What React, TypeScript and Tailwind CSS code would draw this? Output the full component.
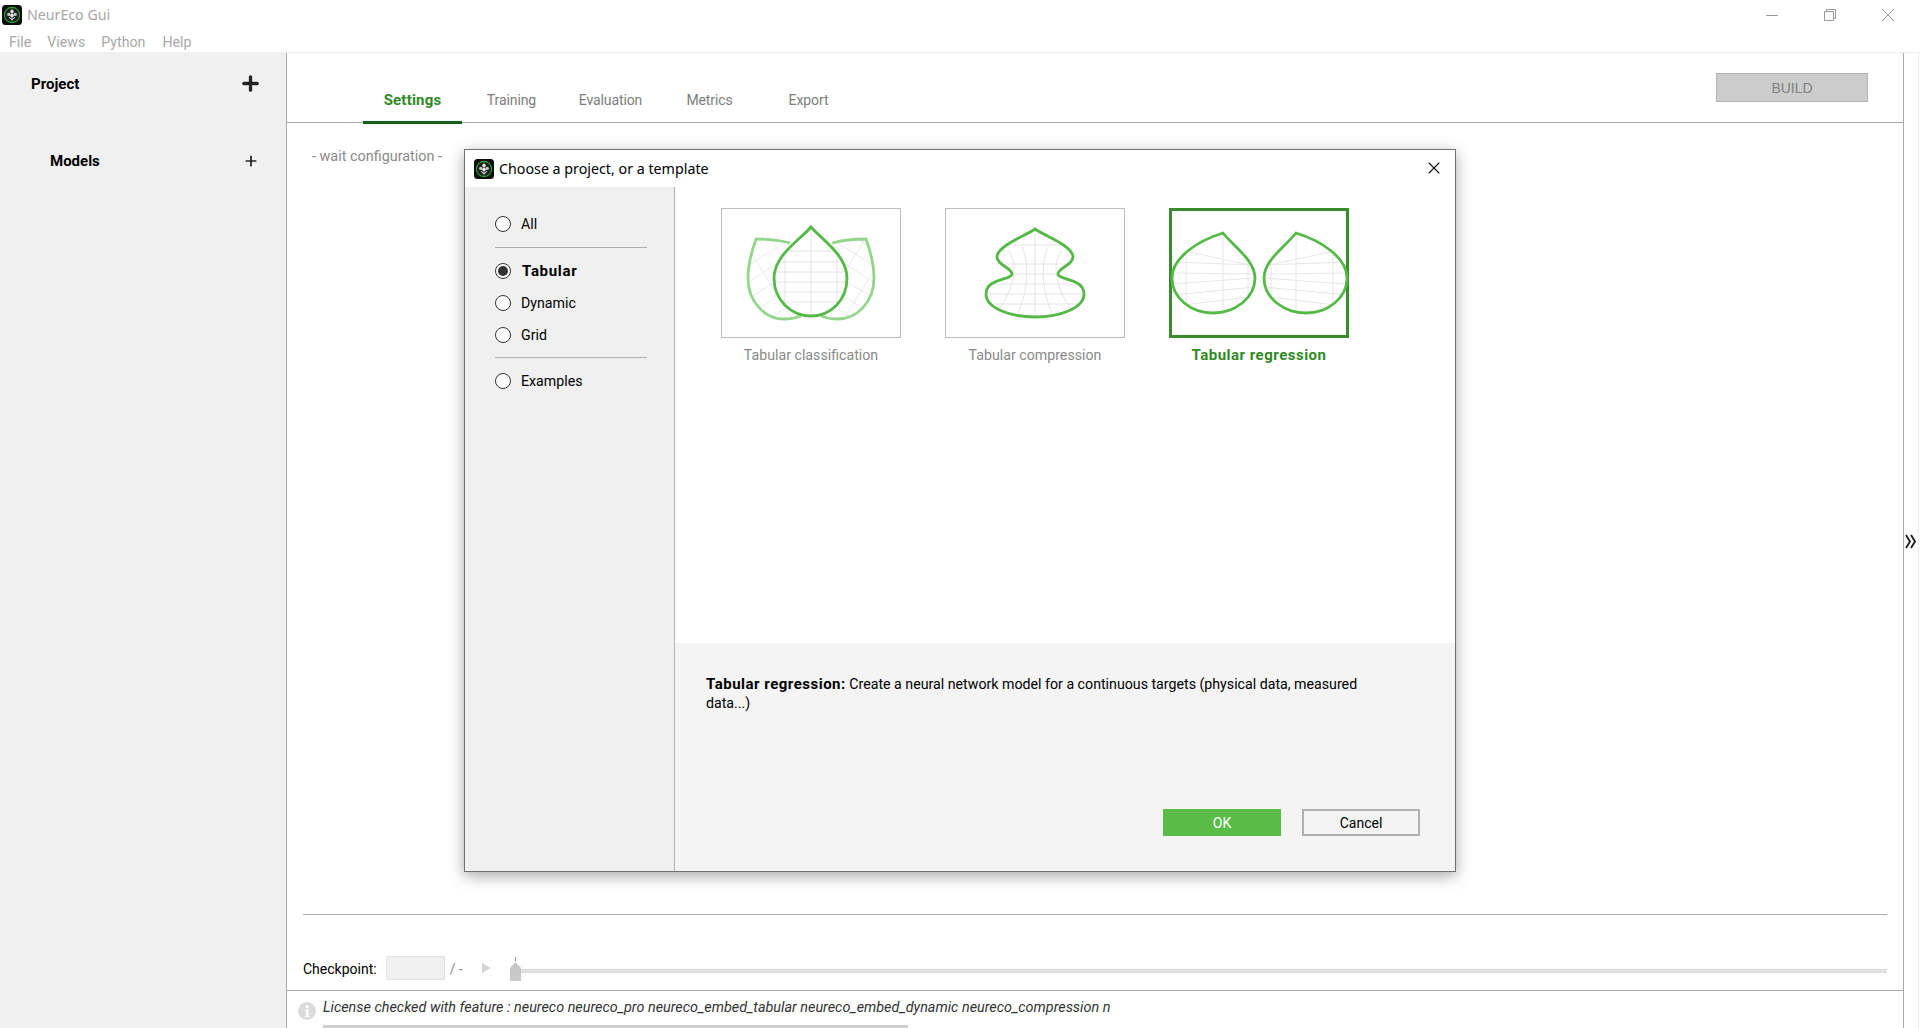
import { Plus, X } from 'lucide-react';

const leafCenter = 'M90 19C100 31 126 47 126 70C126 92 110 108 90 108C70 108 53 92 53 70C53 47 80 31 90 19Z';
const leafSide = 'M69 35C58 32 45 31 35 31C30 45 27 58 27 70C27 95 45 111 63 111C69 111 75 110 80 108';
const compression =
  'M90 21C100 28 128 38 128 49C128 57 113 60 113 66C113 72 139 70 139 86C139 100 115 109 90 109C65 109 41 100 41 86C41 70 67 72 67 66C67 60 52 57 52 49C52 38 80 28 90 21Z';
const regressionLeaf = 'M54 25C64 38 86 52 86 70C86 90 66 105 44 105C22 105 3 90 3 70C3 50 28 33 54 25Z';

const Logo = () => (
  <svg viewBox="0 0 20 20" className="w-5 h-5 shrink-0">
    <rect width="20" height="20" rx="3.5" fill="#0b0f0b" />
    <circle cx="10" cy="10" r="7.6" fill="#1a201a" stroke="#33a03c" strokeWidth="1.1" />
    <path d="M10 3.5V16.5" stroke="#8cc484" strokeWidth="0.8" />
    <circle cx="10" cy="6.6" r="1.8" fill="#dedede" />
    <circle cx="6.8" cy="9.4" r="1.7" fill="#c4c4c4" />
    <circle cx="13.2" cy="9.4" r="1.7" fill="#c4c4c4" />
    <circle cx="10" cy="10.6" r="1.8" fill="#e8e8e8" />
    <path d="M7 12.4L10 14.6L13 12.4" fill="none" stroke="#d4d4d4" strokeWidth="1.1" />
  </svg>
);

const ClassificationArt = () => (
  <svg viewBox="0 0 180 129" className="w-full h-full">
    <defs>
      <clipPath id="cl-center">
        <path d={leafCenter} />
      </clipPath>
      <clipPath id="cl-left">
        <path d={`${leafSide}L90 60Z`} />
      </clipPath>
      <clipPath id="cl-right">
        <path d={`${leafSide}L90 60Z`} transform="matrix(-1 0 0 1 180 0)" />
      </clipPath>
    </defs>
    {['cl-left', 'cl-right'].map((id, n) => (
      <g key={id} clipPath={`url(#${id})`} stroke="#ececec" strokeWidth="1">
        <g transform={n === 0 ? 'rotate(-32 60 70)' : 'rotate(32 120 70)'}>
          {[0, 14, 28, 42, 56, 70, 84, 98, 112, 126, 140].map((y) => (
            <path key={y} d={`M-20 ${y}H200`} />
          ))}
          {[0, 24, 48, 72, 96, 120, 144, 168].map((x) => (
            <path key={x} d={`M${x} -30V160`} />
          ))}
        </g>
      </g>
    ))}
    <path d={leafCenter} fill="#fff" stroke="none" />
    <g clipPath="url(#cl-center)" stroke="#e4e4e4" strokeWidth="1">
      {[43, 54, 64, 74, 84, 94].map((y) => (
        <path key={y} d={`M50 ${y}H130`} />
      ))}
      {[64, 90, 116].map((x) => (
        <path key={x} d={`M${x} 15V110`} />
      ))}
    </g>
    <path d={leafSide} fill="none" stroke="#93d58b" strokeWidth="2.8" />
    <path d={leafSide} fill="none" stroke="#93d58b" strokeWidth="2.8" transform="matrix(-1 0 0 1 180 0)" />
    <path d={leafCenter} fill="none" stroke="#55b947" strokeWidth="2.8" />
  </svg>
);

const CompressionArt = () => (
  <svg viewBox="0 0 180 129" className="w-full h-full">
    <defs>
      <clipPath id="cl-comp">
        <path d={compression} />
      </clipPath>
    </defs>
    <g clipPath="url(#cl-comp)" stroke="#e4e4e4" strokeWidth="1" fill="none">
      {[37, 56, 66, 76, 86, 96].map((y) => (
        <path key={y} d={`M30 ${y}H150`} />
      ))}
      <path d="M90 15V115" />
      <path d="M63 42C72 54 72 74 55 100" />
      <path d="M77 39C84 54 84 80 73 105" />
      <path d="M117 42C108 54 108 74 125 100" />
      <path d="M103 39C96 54 96 80 107 105" />
    </g>
    <path d={compression} fill="none" stroke="#55b947" strokeWidth="2.8" />
  </svg>
);

const RegressionLeaf = () => (
  <>
    <g clipPath="url(#cl-reg)" stroke="#e6e6e6" strokeWidth="1">
      <path d="M17 30V110" />
      <path d="M54 22V110" />
      <path d="M79 40V105" />
      <path d="M20 44L76 56" />
      <path d="M3 54L86 57" />
      <path d="M3 65L86 66" />
      <path d="M3 76L86 70" />
      <path d="M3 87L86 79" />
      <path d="M15 97L80 89" />
    </g>
    <path d={regressionLeaf} fill="none" stroke="#55b947" strokeWidth="2.8" />
  </>
);

const RegressionArt = () => (
  <svg viewBox="0 0 180 129" className="w-full h-full overflow-visible">
    <defs>
      <clipPath id="cl-reg">
        <path d={regressionLeaf} />
      </clipPath>
    </defs>
    <RegressionLeaf />
    <g transform="matrix(-1 0 0 1 181 0)">
      <RegressionLeaf />
    </g>
  </svg>
);

const Radio = ({ label, checked, className }: { label: string; checked?: boolean; className: string }) => (
  <div className={`flex items-center h-[20px] ${className}`}>
    <span className="w-4 h-4 rounded-full border border-[#333] bg-white flex items-center justify-center shrink-0">
      {checked && <span className="w-2.5 h-2.5 rounded-full bg-[#333]" />}
    </span>
    <span
      className={
        checked
          ? 'ml-[11px] text-[15px] tracking-[0.7px] font-bold text-black'
          : 'ml-[10px] mt-[2px] text-[14.2px] text-black'
      }
    >
      {label}
    </span>
  </div>
);

const TemplateCard = ({
  label,
  selected,
  children
}: {
  label: string;
  selected?: boolean;
  children: React.ReactNode;
}) => (
  <div className="w-[180px]">
    <div
      className={
        selected
          ? 'h-[130px] border-[3px] border-[#3a8a2e] relative'
          : 'h-[130px] border border-[#bdbdbd] relative'
      }
    >
      <div
        className={
          selected
            ? 'absolute top-[-3px] left-[-3px] w-[180px] h-[129px]'
            : 'absolute top-[-1px] left-[-1px] w-[180px] h-[129px]'
        }
      >
        {children}
      </div>
    </div>
    <p
      className={
        selected
          ? 'mt-[8px] text-center text-[15px] tracking-[0.5px] font-bold text-[#2f8a25] leading-[18px]'
          : 'mt-[8px] text-center text-[14.2px] text-[#8a8a8a] leading-[18px]'
      }
    >
      {label}
    </p>
  </div>
);

export default function App() {
  const tabs = ['Settings', 'Training', 'Evaluation', 'Metrics', 'Export'];

  return (
    <div className="relative h-[1028px] overflow-hidden bg-white flex flex-col text-[14px] font-['Roboto',sans-serif]">
      {/* window title bar */}
      <div className="h-[29px] flex items-center pl-[2px] shrink-0">
        <Logo />
        <span className="ml-[5px] text-[14.2px] text-[#a6a6a6] font-['Noto_Sans',sans-serif]">NeurEco Gui</span>
        <div className="ml-auto flex items-center pr-[26px] gap-[46px] text-[#9a9a9a]">
          <svg viewBox="0 0 12 12" className="w-3 h-3" fill="none" stroke="currentColor">
            <path d="M0 6.5H12" />
          </svg>
          <svg viewBox="0 0 12 12" className="w-3 h-3" fill="none" stroke="currentColor">
            <path d="M.5 2.5H9.5V11.5H.5Z" />
            <path d="M2.5 2.5V.5H11.5V9.5H9.5" />
          </svg>
          <svg viewBox="0 0 12 12" className="w-3 h-3" fill="none" stroke="currentColor">
            <path d="M0 0L12 12M12 0L0 12" />
          </svg>
        </div>
      </div>

      {/* menu */}
      <div className="h-[24px] pt-[5px] flex items-center shrink-0 text-[14.2px] text-[#a8a8a8] border-b border-[#f0f0f0]">
        <span className="ml-[9px]">File</span>
        <span className="ml-[16px]">Views</span>
        <span className="ml-[16px]">Python</span>
        <span className="ml-[17px]">Help</span>
      </div>

      <div className="flex-1 flex min-h-0">
        <aside className="w-[287px] shrink-0 bg-[#f0f0f0] border-r border-[#aaaaaa] text-[15px] font-bold text-black">
          <div className="h-[60px] flex items-center justify-between pl-[31px] pr-[24px]">
            <span className="mt-[2px]">Project</span>
            <Plus className="w-[23px] h-[23px] text-[#222]" strokeWidth={3.4} />
          </div>
          <div className="h-[38px]" />
          <div className="h-[20px] flex items-center justify-between pl-[50px] pr-[27px]">
            <span>Models</span>
            <Plus className="w-[16px] h-[16px] text-[#222]" strokeWidth={2.6} />
          </div>
        </aside>

        <main className="flex-1 min-w-0 flex flex-col">
          <div className="h-[70px] shrink-0 border-b border-[#aaaaaa] flex pl-[76px] pr-[35px] relative">
            {tabs.map((tab, i) => (
              <div
                key={tab}
                className={
                  i === 0
                    ? 'w-[99px] h-[71px] pt-[38px] text-center leading-[18px] text-[15px] tracking-[0.2px] font-bold text-[#2f8a25] border-b-[3px] border-[#14611a]'
                    : 'w-[99px] h-[70px] pt-[38px] text-center leading-[18px] text-[14px] tracking-[-0.1px] text-[#7d7d7d]'
                }
              >
                {tab}
              </div>
            ))}
            <button className="ml-auto mt-[20px] pt-[2px] w-[152px] h-[29px] bg-[#cccccc] border border-[#b5b5b5] text-[#808080] font-['Liberation_Sans',sans-serif]">
              BUILD
            </button>
          </div>

          <div className="flex-1 min-h-0 pt-[24px] pl-[25px] leading-[18px]">
            <span className="text-[14.4px] text-[#8a8a8a]">- wait configuration -</span>
          </div>

          <div className="mx-[16px] h-px bg-[#b0b0b0] shrink-0" />

          <div className="h-[75px] shrink-0 pl-[16px] pr-[16px] pt-[41px] flex items-start">
            <span className="text-black leading-[26px]">Checkpoint:</span>
            <span className="ml-[9px] w-[59px] h-[24px] bg-[#f0f0f0] border border-[#e4e4e4]" />
            <span className="ml-[5px] leading-[26px] text-[#8a8a8a]">/ -</span>
            <svg viewBox="0 0 9 10" className="ml-[19px] mt-[7px] w-[9px] h-[10px]">
              <path d="M0 0L9 5L0 10Z" fill="#d4d4d4" />
            </svg>
            <div className="ml-[19px] flex-1 relative h-[24px]">
              <div className="absolute left-0 right-0 top-[13px] h-[4px] bg-[#e2e2e2] border-y border-[#d8d8d8]" />
              <div className="absolute left-[5px] top-[1px] w-px h-[4px] bg-[#9a9a9a]" />
              <svg viewBox="0 0 11 19" className="absolute left-0 top-[6px] w-[11px] h-[19px]">
                <path d="M5.5 0L11 6V19H0V6Z" fill="#c8c8c8" />
              </svg>
            </div>
          </div>

          <div className="h-[38px] shrink-0 border-t border-[#aaaaaa] relative">
            <div className="flex items-start pl-[11px] pt-[8px]">
              <svg viewBox="0 0 18 18" className="w-[18px] h-[18px] mt-[3px] shrink-0">
                <circle cx="9" cy="9" r="9" fill="#dcdcdc" />
                <circle cx="9" cy="4.5" r="1.6" fill="#fff" />
                <path d="M7.2 7.5H10.5V14H11.5V15H6.8V14H8V8.6H7.2Z" fill="#fff" />
              </svg>
              <span className="ml-[7px] italic text-[14.4px] text-[#333] leading-[18px] whitespace-nowrap">
                License checked with feature : neureco neureco_pro neureco_embed_tabular neureco_embed_dynamic neureco_compression n
              </span>
            </div>
            <div className="absolute left-[36px] bottom-0 w-[585px] h-[3px] bg-[#d0d0d0]" />
          </div>
        </main>

        <div className="w-[16px] shrink-0 border-l border-[#aaaaaa] border-r border-r-[#eeeeee] mr-px flex items-start justify-center">
          <svg viewBox="0 0 11 15" className="w-[11px] h-[15px] mt-[481px] -ml-[1px] shrink-0" fill="none" stroke="#222" strokeWidth="1.9">
            <path d="M1 1L5 7.5L1 14" />
            <path d="M6 1L10 7.5L6 14" />
          </svg>
        </div>
      </div>

      {/* template dialog */}
      <div className="absolute left-[464px] top-[149px] w-[992px] h-[723px] bg-white border border-[#707070] shadow-[0_4px_14px_rgba(0,0,0,0.35)] flex flex-col">
        <div className="h-[37px] shrink-0 flex items-center pl-[9px] pr-[11px]">
          <Logo />
          <span className="ml-[5px] text-[14.25px] text-black font-['Noto_Sans',sans-serif]">Choose a project, or a template</span>
          <X className="ml-auto mb-[1px] w-[20px] h-[20px] text-[#111]" strokeWidth={1.3} />
        </div>
        <div className="flex-1 min-h-0 flex">
          <div className="w-[210px] shrink-0 bg-[#f0f0f0] border-r border-[#b4b4b4] pl-[30px] pr-[27px] pt-[27px]">
            <Radio label="All" className="" />
            <div className="h-px bg-[#b0b0b0] mt-[13px] mb-[13px]" />
            <Radio label="Tabular" checked className="" />
            <Radio label="Dynamic" className="mt-[12px]" />
            <Radio label="Grid" className="mt-[12px]" />
            <div className="h-px bg-[#b0b0b0] mt-[12px] mb-[13px]" />
            <Radio label="Examples" className="" />
          </div>
          <div className="flex-1 min-w-0 flex flex-col">
            <div className="h-[456px] shrink-0 flex gap-[44px] pl-[46px] pt-[21px]">
              <TemplateCard label="Tabular classification">
                <ClassificationArt />
              </TemplateCard>
              <TemplateCard label="Tabular compression">
                <CompressionArt />
              </TemplateCard>
              <TemplateCard label="Tabular regression" selected>
                <RegressionArt />
              </TemplateCard>
            </div>
            <div className="flex-1 min-h-0 bg-[#f4f4f4] px-[31px] pt-[32px] relative">
              <p className="text-black text-[14.2px] leading-[19px] w-[660px]">
                <b className="text-[15px] tracking-[0.5px]">Tabular regression:</b> Create a neural network model for a continuous targets (physical data, measured data...)
              </p>
              <div className="absolute left-[488px] top-[166px] flex gap-[21px]">
                <button className="w-[118px] h-[27px] pt-[2px] bg-[#5abc46] text-white">OK</button>
                <button className="w-[118px] h-[27px] pt-[1px] bg-[#f4f4f4] border-2 border-[#b0b0b0] text-black">Cancel</button>
              </div>
            </div>
          </div>
        </div>
      </div>
    </div>
  );
}
